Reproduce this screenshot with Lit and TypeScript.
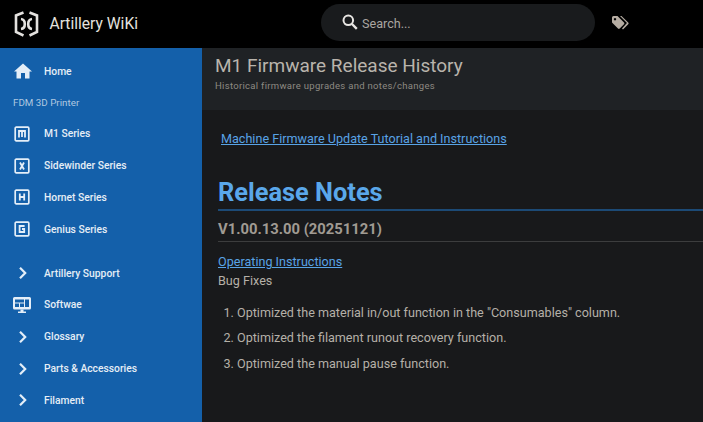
import { LitElement, html, css } from "lit";
import { customElement } from "lit/decorators.js";

const letterBox = (d: string) => html`<svg width="16" height="16" viewBox="0 0 16 16" fill="none" stroke="currentColor">
  <rect x="1.2" y="1.2" width="13.6" height="13.6" rx="1" stroke-width="1.7"></rect>
  <path d="${d}" stroke-width="1.8"></path></svg>`;

const chevron = html`<svg width="16" height="16" viewBox="0 0 16 16" fill="none" stroke="currentColor" stroke-width="2.2"><path d="M6 2.8 L11.2 8 L6 13.2"></path></svg>`;

const home = html`<svg width="18" height="16" viewBox="0 0 18 16" fill="currentColor"><path d="M9 0.5 L18 8.5 L15.5 8.5 L15.5 15.5 L11 15.5 L11 10 L7 10 L7 15.5 L2.5 15.5 L2.5 8.5 L0 8.5 Z"></path></svg>`;

const monitor = html`<svg width="18" height="16" viewBox="0 0 18 16"><path fill="currentColor" fill-rule="evenodd" d="M1.5 0 H16.5 A1.5 1.5 0 0 1 18 1.5 V11 A1.5 1.5 0 0 1 16.5 12.5 H1.5 A1.5 1.5 0 0 1 0 11 V1.5 A1.5 1.5 0 0 1 1.5 0 Z M2 2.5 V5.5 H11 V2.5 Z M12 2.5 V10 H16 V2.5 Z M2 6.5 V10 H6 V6.5 Z M7 6.5 V10 H11 V6.5 Z"></path><path fill="currentColor" d="M7.5 12.5 H10.5 V14.5 H13 V16 H5 V14.5 H7.5 Z"></path></svg>`;

interface Item { label: string; icon: unknown; }

const series: Item[] = [
  { label: "M1 Series", icon: letterBox("M5 11.5 V5 H11 V11.5 M8 5 V11") },
  { label: "Sidewinder Series", icon: letterBox("M6 4.5 L10 11.5 M10 4.5 L6 11.5") },
  { label: "Hornet Series", icon: letterBox("M5.8 4.5 V11.5 M10.2 4.5 V11.5 M5.8 8 H10.2") },
  { label: "Genius Series", icon: letterBox("M10.6 5 H5.6 V11 H10.2 V8 H8") },
];
const rest: Item[] = [
  { label: "Artillery Support", icon: chevron },
  { label: "Softwae", icon: monitor },
  { label: "Glossary", icon: chevron },
  { label: "Parts & Accessories", icon: chevron },
  { label: "Filament", icon: chevron },
];
const notes = [
  'Optimized the material in/out function in the "Consumables" column.',
  "Optimized the filament runout recovery function.",
  "Optimized the manual pause function.",
];

@customElement("app-root")
export class AppRoot extends LitElement {
  static styles = css`
    :host { display: block; width: 703px; height: 422px; overflow: hidden; background: #18191b; font-family: Roboto, "Liberation Sans", sans-serif; }
    .top { height: 48px; background: #000; display: flex; align-items: center; }
    .brand { width: 321px; display: flex; align-items: center; padding-left: 14px; box-sizing: border-box; gap: 10.5px; color: #e4e2df; font-size: 15.6px; }
    .search { width: 274px; height: 37px; margin-top: -3px; border-radius: 19px; background: #191b1d; display: flex; align-items: center; padding-left: 21px; box-sizing: border-box; gap: 4px; color: #a9a6a1; font-size: 12.6px; }
    .search span { margin-top: 1px; }
    .search svg { color: #e8e6e3; margin-top: -2px; }
    .tag { margin-left: 17px; margin-top: -3px; color: #b5aca2; display: flex; }
    .body { display: flex; height: 374px; }
    .side { width: 202px; flex: none; background: #1460aa; color: #e6eef6; font-size: 10.3px; font-weight: 500; overflow: hidden; }
    .row { height: 31.8px; display: flex; align-items: center; }
    .ico { width: 44px; padding-left: 14px; box-sizing: border-box; display: flex; flex: none; color: #e4eef8; }
    .ico.wide { padding-left: 13px; }
    .head { height: 30.9px; display: flex; align-items: center; padding-left: 13px; color: #b0c8e0; font-size: 9.8px; font-weight: 400; }
    .gap { height: 12.1px; }
    .home { margin-top: 7.3px; }
    .main { flex: 1; min-width: 0; }
    .hero { height: 62px; background: #1f2225; padding: 7px 0 0 13px; box-sizing: border-box; }
    h1 { margin: 0; font-size: 19px; font-weight: 400; line-height: 21px; color: #b9b4ac; }
    .sub { font-size: 9.5px; line-height: 12px; margin-top: 4px; color: #8e8a83; letter-spacing: 0.3px; }
    .content { padding: 21px 0 0 16px; font-size: 12.6px; color: #b5b0a8; }
    a { color: #58a3e6; text-decoration: underline; }
    .lead { margin-left: 3px; line-height: 15px; display: block; }
    h2 { margin: 30px 0 0; font-size: 25.4px; line-height: 33px; font-weight: 700; color: #5aa7ea; border-bottom: 2px solid #1c4a76; }
    h3 { margin: 8px 0 0; font-size: 14.8px; line-height: 20px; font-weight: 700; color: #a09b93; border-bottom: 1px solid #3c3d3e; padding-bottom: 2px; }
    .op { display: block; margin-top: 12px; line-height: 16px; }
    .bug { line-height: 16px; margin-top: 3px; }
    ol { margin: 16px 0 0; padding: 0 0 0 19px; }
    li { line-height: 16px; margin-bottom: 9.4px; }
  `;

  private renderRow(i: Item) {
    const wide = i.icon === monitor;
    return html`<div class="row"><span class="ico ${wide ? "wide" : ""}">${i.icon}</span><span>${i.label}</span></div>`;
  }

  render() {
    return html`
      <div class="top">
        <div class="brand">
          <svg width="25" height="26" viewBox="0 0 25 26" fill="none" stroke="currentColor" stroke-width="2.6">
            <path d="M9.5 1.5 L2 4.5 V21 L9.5 24.5"></path>
            <path d="M15.5 1.5 L23 4.5 V21 L15.5 24.5"></path>
            <path d="M7 8 Q10.8 8.5 10.8 13 Q10.8 17.5 7 18"></path>
            <path d="M18 8 Q14.2 8.5 14.2 13 Q14.2 17.5 18 18"></path>
          </svg>
          <span>Artillery WiKi</span>
        </div>
        <div class="search">
          <svg width="16" height="16" viewBox="0 0 16 16" fill="none" stroke="currentColor" stroke-width="2"><circle cx="6.3" cy="6.3" r="4.8"></circle><path d="M10 10 L14.8 14.8" stroke-width="2.4"></path></svg>
          <span>Search...</span>
        </div>
        <div class="tag">
          <svg width="17" height="14" viewBox="0 0 17 14" fill="currentColor"><path fill-rule="evenodd" d="M0 1.5 A1.5 1.5 0 0 1 1.5 0 H5.5 L12 6.5 A1.2 1.2 0 0 1 12 8.2 L7.7 12.5 A1.2 1.2 0 0 1 6 12.5 L0 6.5 Z M3 2 A1.2 1.2 0 1 0 3.01 2 Z"></path><path d="M8 0 H9.5 L16.2 6.5 A1.2 1.2 0 0 1 16.2 8.2 L11 13.5 L10 12.5 L14 8 A1.2 1.2 0 0 0 14 6 Z"></path></svg>
        </div>
      </div>
      <div class="body">
        <nav class="side">
          <div class="row home"><span class="ico">${home}</span><span>Home</span></div>
          <div class="head">FDM 3D Printer</div>
          ${series.map((i) => this.renderRow(i))}
          <div class="gap"></div>
          ${rest.map((i) => this.renderRow(i))}
        </nav>
        <main class="main">
          <div class="hero">
            <h1>M1 Firmware Release History</h1>
            <div class="sub">Historical firmware upgrades and notes/changes</div>
          </div>
          <div class="content">
            <a class="lead" href="#">Machine Firmware Update Tutorial and Instructions</a>
            <h2>Release Notes</h2>
            <h3>V1.00.13.00 (20251121)</h3>
            <a class="op" href="#">Operating Instructions</a>
            <div class="bug">Bug Fixes</div>
            <ol>${notes.map((n) => html`<li>${n}</li>`)}</ol>
          </div>
        </main>
      </div>
    `;
  }
}
